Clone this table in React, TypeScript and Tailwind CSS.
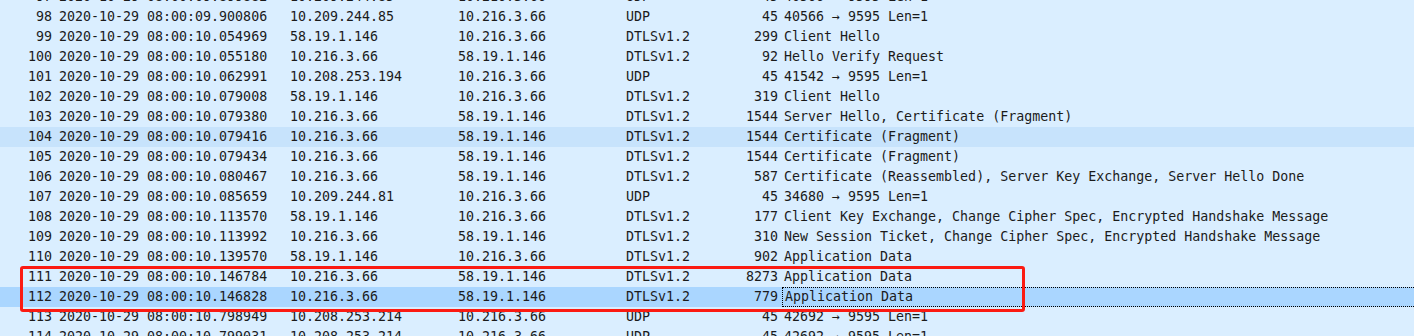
import React from 'react';

type Packet = {
  no: number;
  time: string;
  src: string;
  dst: string;
  proto: string;
  len: number;
  info: string;
};

const packets: Packet[] = [
  { no: 97, time: '2020-10-29 08:00:09.899882', src: '10.209.244.85', dst: '10.216.3.66', proto: 'UDP', len: 45, info: '40566 → 9595 Len=1' },
  { no: 98, time: '2020-10-29 08:00:09.900806', src: '10.209.244.85', dst: '10.216.3.66', proto: 'UDP', len: 45, info: '40566 → 9595 Len=1' },
  { no: 99, time: '2020-10-29 08:00:10.054969', src: '58.19.1.146', dst: '10.216.3.66', proto: 'DTLSv1.2', len: 299, info: 'Client Hello' },
  { no: 100, time: '2020-10-29 08:00:10.055180', src: '10.216.3.66', dst: '58.19.1.146', proto: 'DTLSv1.2', len: 92, info: 'Hello Verify Request' },
  { no: 101, time: '2020-10-29 08:00:10.062991', src: '10.208.253.194', dst: '10.216.3.66', proto: 'UDP', len: 45, info: '41542 → 9595 Len=1' },
  { no: 102, time: '2020-10-29 08:00:10.079008', src: '58.19.1.146', dst: '10.216.3.66', proto: 'DTLSv1.2', len: 319, info: 'Client Hello' },
  { no: 103, time: '2020-10-29 08:00:10.079380', src: '10.216.3.66', dst: '58.19.1.146', proto: 'DTLSv1.2', len: 1544, info: 'Server Hello, Certificate (Fragment)' },
  { no: 104, time: '2020-10-29 08:00:10.079416', src: '10.216.3.66', dst: '58.19.1.146', proto: 'DTLSv1.2', len: 1544, info: 'Certificate (Fragment)' },
  { no: 105, time: '2020-10-29 08:00:10.079434', src: '10.216.3.66', dst: '58.19.1.146', proto: 'DTLSv1.2', len: 1544, info: 'Certificate (Fragment)' },
  { no: 106, time: '2020-10-29 08:00:10.080467', src: '10.216.3.66', dst: '58.19.1.146', proto: 'DTLSv1.2', len: 587, info: 'Certificate (Reassembled), Server Key Exchange, Server Hello Done' },
  { no: 107, time: '2020-10-29 08:00:10.085659', src: '10.209.244.81', dst: '10.216.3.66', proto: 'UDP', len: 45, info: '34680 → 9595 Len=1' },
  { no: 108, time: '2020-10-29 08:00:10.113570', src: '58.19.1.146', dst: '10.216.3.66', proto: 'DTLSv1.2', len: 177, info: 'Client Key Exchange, Change Cipher Spec, Encrypted Handshake Message' },
  { no: 109, time: '2020-10-29 08:00:10.113992', src: '10.216.3.66', dst: '58.19.1.146', proto: 'DTLSv1.2', len: 310, info: 'New Session Ticket, Change Cipher Spec, Encrypted Handshake Message' },
  { no: 110, time: '2020-10-29 08:00:10.139570', src: '58.19.1.146', dst: '10.216.3.66', proto: 'DTLSv1.2', len: 902, info: 'Application Data' },
  { no: 111, time: '2020-10-29 08:00:10.146784', src: '10.216.3.66', dst: '58.19.1.146', proto: 'DTLSv1.2', len: 8273, info: 'Application Data' },
  { no: 112, time: '2020-10-29 08:00:10.146828', src: '10.216.3.66', dst: '58.19.1.146', proto: 'DTLSv1.2', len: 779, info: 'Application Data' },
  { no: 113, time: '2020-10-29 08:00:10.798949', src: '10.208.253.214', dst: '10.216.3.66', proto: 'UDP', len: 45, info: '42692 → 9595 Len=1' },
  { no: 114, time: '2020-10-29 08:00:10.799031', src: '10.208.253.214', dst: '10.216.3.66', proto: 'UDP', len: 45, info: '42692 → 9595 Len=1' },
];

const HOVER_ROW = 104;
const SELECTED_ROW = 112;

const PacketRow: React.FC<{ p: Packet }> = ({ p }) => {
  const selected = p.no === SELECTED_ROW;
  const bg = selected ? 'bg-[#aad6ff]' : p.no === HOVER_ROW ? 'bg-[#c7e3fc]' : 'bg-[#daeeff]';

  return (
    <div className={`flex h-[20px] items-center whitespace-pre ${bg}`}>
      <div className="w-[52px] shrink-0 text-right">{p.no}</div>
      <div className="w-[238px] shrink-0 pl-[7px]">{p.time}</div>
      <div className="w-[168px] shrink-0">{p.src}</div>
      <div className="w-[168px] shrink-0">{p.dst}</div>
      <div className="w-[100px] shrink-0">{p.proto}</div>
      <div className="w-[52px] shrink-0 text-right">{p.len}</div>
      {/* Info column, keyboard focus outline on the selected row */}
      <div
        className={`ml-[4px] flex h-full flex-1 items-center pl-[2px] ${
          selected ? 'border-y border-l border-dotted border-black' : ''
        }`}
      >
        {p.info}
      </div>
    </div>
  );
};

export default function App() {
  return (
    <div
      className="relative h-[336px] w-[1414px] overflow-hidden bg-[#daeeff] text-[13.3px] text-[#1b1b1b]"
      style={{ fontFamily: '"DejaVu Sans Mono", "Liberation Mono", monospace' }}
    >
      <div className="mt-[-13px] flex flex-col">
        {packets.map((p) => (
          <PacketRow key={p.no} p={p} />
        ))}
      </div>

      {/* red annotation box around packets 111-112 */}
      <div className="pointer-events-none absolute left-[20px] top-[266px] h-[46px] w-[1005px] rounded-[3px] border-[3px] border-[#fb1a12]" />
    </div>
  );
}
